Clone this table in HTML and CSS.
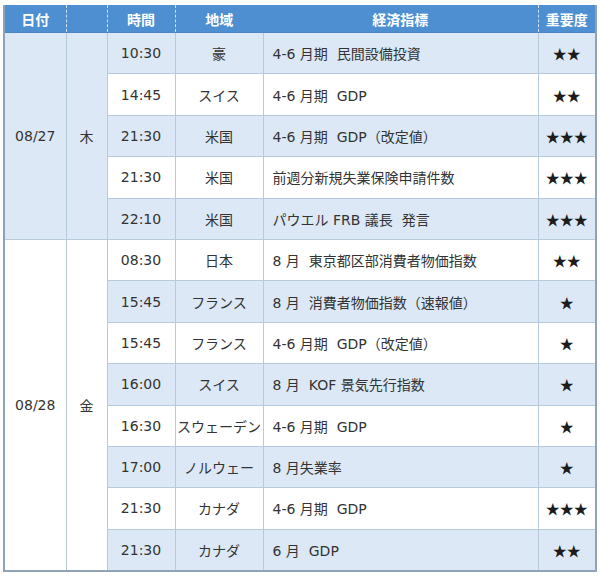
FILE: index.html
```html
<!DOCTYPE html>
<html lang="ja">
<head>
<meta charset="utf-8">
<link rel="stylesheet" href="styles.css">
</head>
<body>
<table class="cal">
  <colgroup>
    <col class="c-date"><col class="c-dow"><col class="c-time"><col class="c-area"><col class="c-ind"><col class="c-imp">
  </colgroup>
  <thead>
    <tr>
      <th class="sep">日付</th><th class="sep"></th><th class="sep">時間</th><th>地域</th><th class="sep">経済指標</th><th>重要度</th>
    </tr>
  </thead>
  <tbody class="grp grp-a">
    <tr class="odd">
      <td class="date" rowspan="5">08/27</td><td class="dow" rowspan="5">木</td>
      <td class="time">10:30</td><td class="area">豪</td><td class="ind">4-6 月期&nbsp; 民間設備投資</td><td class="imp">★★</td>
    </tr>
    <tr><td class="time">14:45</td><td class="area">スイス</td><td class="ind">4-6 月期&nbsp; GDP</td><td class="imp">★★</td></tr>
    <tr class="odd"><td class="time">21:30</td><td class="area">米国</td><td class="ind">4-6 月期&nbsp; GDP（改定値）</td><td class="imp">★★★</td></tr>
    <tr><td class="time">21:30</td><td class="area">米国</td><td class="ind">前週分新規失業保険申請件数</td><td class="imp">★★★</td></tr>
    <tr class="odd"><td class="time">22:10</td><td class="area">米国</td><td class="ind">パウエル FRB 議長&nbsp; 発言</td><td class="imp">★★★</td></tr>
  </tbody>
  <tbody class="grp grp-b">
    <tr>
      <td class="date" rowspan="8">08/28</td><td class="dow" rowspan="8">金</td>
      <td class="time">08:30</td><td class="area">日本</td><td class="ind">8 月&nbsp; 東京都区部消費者物価指数</td><td class="imp">★★</td>
    </tr>
    <tr class="odd"><td class="time">15:45</td><td class="area">フランス</td><td class="ind">8 月&nbsp; 消費者物価指数（速報値）</td><td class="imp">★</td></tr>
    <tr><td class="time">15:45</td><td class="area">フランス</td><td class="ind">4-6 月期&nbsp; GDP（改定値）</td><td class="imp">★</td></tr>
    <tr class="odd"><td class="time">16:00</td><td class="area">スイス</td><td class="ind">8 月&nbsp; KOF 景気先行指数</td><td class="imp">★</td></tr>
    <tr><td class="time">16:30</td><td class="area">スウェーデン</td><td class="ind">4-6 月期&nbsp; GDP</td><td class="imp">★</td></tr>
    <tr class="odd"><td class="time">17:00</td><td class="area">ノルウェー</td><td class="ind">8 月失業率</td><td class="imp">★</td></tr>
    <tr><td class="time">21:30</td><td class="area">カナダ</td><td class="ind">4-6 月期&nbsp; GDP</td><td class="imp">★★★</td></tr>
    <tr class="odd"><td class="time">21:30</td><td class="area">カナダ</td><td class="ind">6 月&nbsp; GDP</td><td class="imp">★★</td></tr>
  </tbody>
</table>
</body>
</html>
```

FILE: styles.css
```css
html, body {
  margin: 0;
  padding: 0;
  background: #ffffff;
}

body {
  padding: 5px 0 0 3px;
  font-family: "DejaVu Sans", "Noto Sans CJK JP", sans-serif;
  color: #333333;
}

.cal {
  border-collapse: collapse;
  table-layout: fixed;
  width: 594px;
  border: 2px solid #8fa2b6;
  border-top: none;
  font-size: 14px;
}

.c-date { width: 62px; }
.c-dow { width: 41px; }
.c-time { width: 68px; }
.c-area { width: 88px; }
.c-ind { width: 275px; }

.cal th {
  height: 27px;
  padding: 0;
  background: #4e8fd1;
  color: #ffffff;
  font-family: "Noto Sans CJK JP", sans-serif;
  font-weight: 700;
  font-size: 14px;
  text-align: center;
  border-bottom: 1px solid #4a86c0;
}

.cal th.sep {
  border-right: 1px dashed #cfe0f2;
}

.cal td {
  height: 40.4px;
  padding: 0;
  text-align: center;
  border: 1px solid #b7cadc;
  white-space: nowrap;
}

.cal td.ind {
  text-align: left;
  padding-left: 9px;
}

.cal td.imp {
  font-family: "Noto Sans CJK JP", sans-serif;
  font-size: 14px;
  color: #1c1c1c;
}

.cal tr.odd td {
  background: #dce8f5;
}

.grp-a td.date, .grp-a td.dow {
  background: #dce8f5;
}

.grp-b td.date, .grp-b td.dow {
  background: #ffffff;
}

.grp-b tr:first-child td {
  border-top: 1px solid #8fa2b6;
}

.cal td.date, .cal td.dow {
  vertical-align: middle;
}
```
